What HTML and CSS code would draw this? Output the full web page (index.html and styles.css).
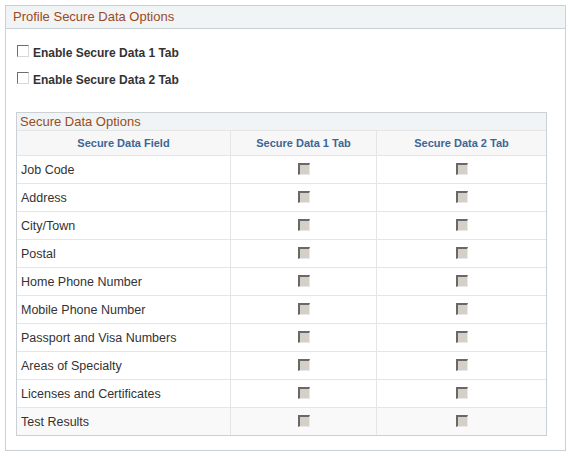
FILE: index.html
```html
<!DOCTYPE html>
<html>
<head>
<meta charset="utf-8">
<link rel="stylesheet" href="styles.css">
</head>
<body>
<div class="panel">
  <div class="panel-head">Profile Secure Data Options</div>
  <div class="panel-body">
    <label class="opt"><span class="cb"></span>Enable Secure Data 1 Tab</label>
    <label class="opt"><span class="cb"></span>Enable Secure Data 2 Tab</label>
    <div class="grid">
      <div class="grid-title">Secure Data Options</div>
      <table>
        <thead>
          <tr><th class="c1">Secure Data Field</th><th class="c2">Secure Data 1 Tab</th><th class="c3">Secure Data 2 Tab</th></tr>
        </thead>
        <tbody>
          <tr><td>Job Code</td><td class="ctr"><span class="dcb"></span></td><td class="ctr"><span class="dcb"></span></td></tr>
          <tr><td>Address</td><td class="ctr"><span class="dcb"></span></td><td class="ctr"><span class="dcb"></span></td></tr>
          <tr><td>City/Town</td><td class="ctr"><span class="dcb"></span></td><td class="ctr"><span class="dcb"></span></td></tr>
          <tr><td>Postal</td><td class="ctr"><span class="dcb"></span></td><td class="ctr"><span class="dcb"></span></td></tr>
          <tr><td>Home Phone Number</td><td class="ctr"><span class="dcb"></span></td><td class="ctr"><span class="dcb"></span></td></tr>
          <tr><td>Mobile Phone Number</td><td class="ctr"><span class="dcb"></span></td><td class="ctr"><span class="dcb"></span></td></tr>
          <tr><td>Passport and Visa Numbers</td><td class="ctr"><span class="dcb"></span></td><td class="ctr"><span class="dcb"></span></td></tr>
          <tr><td>Areas of Specialty</td><td class="ctr"><span class="dcb"></span></td><td class="ctr"><span class="dcb"></span></td></tr>
          <tr><td>Licenses and Certificates</td><td class="ctr"><span class="dcb"></span></td><td class="ctr"><span class="dcb"></span></td></tr>
          <tr class="shade"><td>Test Results</td><td class="ctr"><span class="dcb"></span></td><td class="ctr"><span class="dcb"></span></td></tr>
        </tbody>
      </table>
    </div>
  </div>
</div>
</body>
</html>
```
FILE: styles.css
```css
body {
  margin: 0;
  background: #ffffff;
  font-family: Arial, "Liberation Sans", sans-serif;
  color: #333333;
}
.panel {
  margin: 5px 0 0 5px;
  width: 561px;
  border: 1px solid #cbd0d4;
  box-sizing: border-box;
  height: 446px;
}
.panel-head {
  height: 22px;
  line-height: 21px;
  background: #f0f4f5;
  border-bottom: 1px solid #cbd0d4;
  color: #9c4a21;
  font-size: 13px;
  padding-left: 7px;
}
.panel-body {
  padding: 17px 0 0 10px;
}
.opt {
  display: flex;
  align-items: center;
  height: 13px;
  font-size: 12px;
  font-weight: bold;
  color: #333333;
  margin-left: 1px;
  margin-bottom: 14px;
}
.cb {
  display: inline-block;
  width: 12px;
  height: 12px;
  box-sizing: border-box;
  border-top: 1px solid #6e6e6e;
  border-left: 1px solid #6e6e6e;
  border-right: 1px solid #d8d8d8;
  border-bottom: 1px solid #d8d8d8;
  background: #ffffff;
  margin-right: 4px;
  position: relative;
  top: -2px;
}
.grid {
  margin-top: 26px;
  width: 531px;
  border: 1px solid #cbd0d4;
  box-sizing: border-box;
}
.grid-title {
  height: 17px;
  line-height: 17px;
  background: #f0f4f5;
  color: #9c4a21;
  font-size: 13px;
  padding-left: 3px;
}
table {
  width: 100%;
  border-collapse: collapse;
  table-layout: fixed;
}
th {
  height: 24px;
  background: #f7f7f7;
  color: #3d6695;
  font-size: 11px;
  font-weight: bold;
  text-align: center;
  border: 1px solid #e5e5e5;
  padding: 0;
}
th.c1 { width: 213px; }
th.c2 { width: 145px; }
td {
  height: 27px;
  font-size: 12.5px;
  color: #333333;
  border: 1px solid #e5e5e5;
  padding: 0 0 0 4px;
}
tr td:first-child, tr th:first-child { border-left: none; }
tr td:last-child, tr th:last-child { border-right: none; }
tbody tr:last-child td { border-bottom: none; }
td.ctr {
  text-align: center;
  padding: 0;
}
tr.shade td { background: #f9f9f9; }
.dcb {
  display: inline-block;
  width: 12px;
  height: 12px;
  box-sizing: border-box;
  background: #d4d0c8;
  border-top: 2px solid #686868;
  border-left: 2px solid #686868;
  border-right: 1px solid #e8e8e8;
  border-bottom: 1px solid #e8e8e8;
  vertical-align: middle;
  position: relative;
  top: -1px;
}
```
